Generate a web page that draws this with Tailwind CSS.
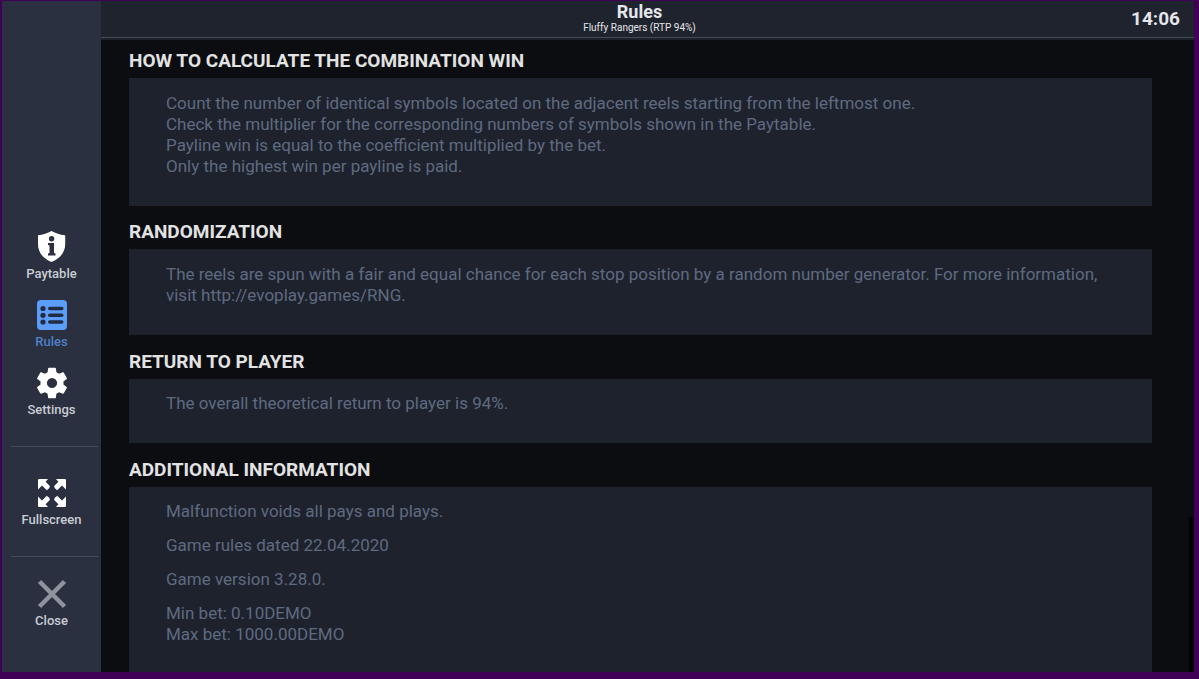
<!DOCTYPE html>
<html lang="en">
  <head>
    <meta charset="UTF-8" />
    <meta name="viewport" content="width=device-width, initial-scale=1.0" />
    <title>Rules - Fluffy Rangers</title>
    <script src="https://cdn.jsdelivr.net/npm/@tailwindcss/browser@4"></script>
  </head>
  <body
    class="h-screen overflow-hidden bg-[#3f0055] pt-px pr-[5px] pb-[7px] pl-[2px] font-['Roboto',sans-serif]"
  >
    <div class="flex h-full bg-[#0b0d11]">
      <!-- Sidebar -->
      <aside
        class="flex w-[99px] shrink-0 flex-col justify-end bg-[#2a3040] pb-[41px] text-[13px] leading-[21px] font-medium text-[#c9ccd3]"
      >
        <nav class="flex flex-col gap-[15px] pb-[26px]">
          <button type="button" class="flex flex-col items-center">
            <svg class="size-8" viewBox="0 0 32 32" aria-hidden="true">
              <path
                fill="#fff"
                d="M15.500 0C19.500 2.400 24 3.800 29.200 4.200V13C29.200 21.500 24 27.500 15.500 31C7 27.500 2 21.500 2 13V4.200C7 3.800 11.500 2.400 15.500 0Z"
              />
              <circle cx="15.600" cy="7.800" r="2.700" fill="#2a3040" />
              <path fill="#2a3040" d="M12 12H18V22L19.500 22.500V24.500H12V22.500L13.500 22V14.500L12 14Z" />
            </svg>
            Paytable
          </button>
          <button
            type="button"
            class="flex flex-col items-center text-[#4f7fc6]"
            aria-current="page"
          >
            <svg class="size-8" viewBox="0 0 32 32" aria-hidden="true">
              <rect x="1" y="1" width="30" height="30" rx="4" fill="#5c9dfa" />
              <g fill="#222c40">
                <circle cx="7" cy="9.500" r="2.600" />
                <circle cx="7" cy="16.300" r="2.600" />
                <circle cx="7" cy="23" r="2.600" />
                <rect x="12" y="7.700" width="15.500" height="3.600" rx="1.800" />
                <rect x="12" y="14.500" width="15.500" height="3.600" rx="1.800" />
                <rect x="12" y="21.200" width="15.500" height="3.600" rx="1.800" />
              </g>
            </svg>
            Rules
          </button>
          <button type="button" class="flex flex-col items-center">
            <svg class="size-8" viewBox="2 2 20 20" aria-hidden="true">
              <path
                fill="#fff"
                d="M19.140 12.940c.040-.300.060-.610.060-.940 0-.320-.020-.640-.070-.940l2.030-1.580c.180-.140.230-.410.120-.610l-1.920-3.320c-.120-.220-.370-.290-.590-.220l-2.390.960c-.500-.380-1.030-.700-1.620-.940l-.360-2.540c-.040-.240-.240-.410-.480-.410h-3.840c-.240 0-.430.170-.470.410l-.360 2.540c-.590.240-1.130.570-1.620.940l-2.390-.960c-.220-.080-.470 0-.590.220L2.740 8.870c-.120.210-.080.470.120.610l2.030 1.580c-.050.300-.090.630-.090.940s.020.640.070.940l-2.030 1.580c-.180.140-.230.410-.120.610l1.920 3.320c.120.220.370.290.590.220l2.390-.960c.500.380 1.030.700 1.620.940l.360 2.540c.050.240.240.410.480.410h3.840c.240 0 .440-.170.470-.410l.360-2.540c.590-.240 1.130-.560 1.620-.940l2.390.960c.220.080.470 0 .590-.220l1.920-3.320c.120-.220.070-.470-.120-.610l-2.010-1.580zM12 15.200a3.200 3.200 0 1 1 0-6.400 3.200 3.200 0 0 1 0 6.400z"
              />
            </svg>
            Settings
          </button>
        </nav>
        <hr class="mr-[3px] ml-[9px] border-[#464c5a]" />
        <button type="button" class="flex flex-col items-center pt-[30px] pb-[26px]">
          <svg class="size-8" viewBox="0 0 32 32" aria-hidden="true">
            <path
              id="arrow"
              fill="#fff"
              d="M3 2H12L9.600 4.700L13.800 9L13.400 11L10.800 13.200L6 8.500L2 12.500V3A1 1 0 0 1 3 2Z"
            />
            <use href="#arrow" transform="matrix(-1 0 0 1 32 0)" />
            <use href="#arrow" transform="matrix(1 0 0 -1 0 32)" />
            <use href="#arrow" transform="matrix(-1 0 0 -1 32 32)" />
          </svg>
          Fullscreen
        </button>
        <hr class="mr-[3px] ml-[9px] border-[#464c5a]" />
        <button type="button" class="flex flex-col items-center pt-[21px]">
          <svg class="size-8" viewBox="0 0 32 32" aria-hidden="true">
            <path
              d="M3.500 3.500L28.500 28.500M28.500 3.500L3.500 28.500"
              stroke="#8f939b"
              stroke-width="4.500"
            />
          </svg>
          Close
        </button>
      </aside>

      <div class="relative flex min-w-0 flex-1 flex-col">
        <!-- Header -->
        <header
          class="grid h-[37px] shrink-0 grid-cols-[1fr_auto_1fr] items-center border-b border-[#454c58] bg-[#1f232d] text-[#e4e6ec]"
        >
          <div class="col-start-2 pr-4 pb-[2px] text-center">
            <h1 class="text-lg leading-5 font-bold">Rules</h1>
            <p class="text-[10px] leading-3">Fluffy Rangers (RTP 94%)</p>
          </div>
          <time class="pr-[14px] text-right text-[19px] font-bold">14:06</time>
        </header>

        <!-- Rules text -->
        <main
          class="min-h-0 flex-1 overflow-hidden border-t-2 border-[#1c222b] pr-[42px] pl-7 text-[17px] leading-[21px] text-[#5e6a81]"
        >
          <section>
            <h2 class="pt-[7px] pb-[3px] text-[19px] leading-7 font-bold text-[#e2e2e2]">
              HOW TO CALCULATE THE COMBINATION WIN
            </h2>
            <div class="bg-[#1e222c] px-[37px] pt-[15px] pb-[29px]">
              <p>
                Count the number of identical symbols located on the adjacent
                reels starting from the leftmost one.<br />
                Check the multiplier for the corresponding numbers of symbols
                shown in the Paytable.<br />
                Payline win is equal to the coefficient multiplied by the bet.<br />
                Only the highest win per payline is paid.
              </p>
            </div>
          </section>
          <section>
            <h2 class="pt-3 pb-[3px] text-[19px] leading-7 font-bold text-[#e2e2e2]">
              RANDOMIZATION
            </h2>
            <div class="bg-[#1e222c] px-[37px] pt-[15px] pb-[29px]">
              <p>
                The reels are spun with a fair and equal chance for each stop
                position by a random number generator. For more information,<br />
                visit http://evoplay.games/RNG.
              </p>
            </div>
          </section>
          <section>
            <h2 class="pt-[13px] pb-[3px] text-[19px] leading-7 font-bold text-[#e2e2e2]">
              RETURN TO PLAYER
            </h2>
            <div class="bg-[#1e222c] px-[37px] pt-[14px] pb-[29px]">
              <p>The overall theoretical return to player is 94%.</p>
            </div>
          </section>
          <section>
            <h2 class="pt-[13px] pb-[3px] text-[19px] leading-7 font-bold text-[#e2e2e2]">
              ADDITIONAL INFORMATION
            </h2>
            <div
              class="flex flex-col gap-[13px] bg-[#1e222c] px-[37px] pt-[14px] pb-[29px]"
            >
              <p>Malfunction voids all pays and plays.</p>
              <p>Game rules dated 22.04.2020</p>
              <p>Game version 3.28.0.</p>
              <p>
                Min bet: 0.10DEMO<br />
                Max bet: 1000.00DEMO
              </p>
            </div>
          </section>
        </main>

        <!-- Scrollbar thumb -->
        <div class="absolute right-0 bottom-0 h-[155px] w-[5px] bg-black"></div>
      </div>
    </div>
  </body>
</html>
